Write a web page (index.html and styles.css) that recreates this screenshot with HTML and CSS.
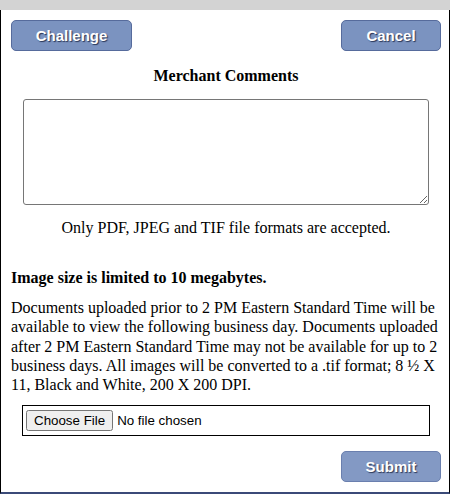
FILE: index.html
```html
<!DOCTYPE html>
<html lang="en">
  <head>
    <meta charset="UTF-8" />
    <meta name="viewport" content="width=device-width, initial-scale=1.0" />
    <title>Challenge Dispute</title>
    <link rel="stylesheet" href="styles.css">
  </head>
  <body>
    <div class="top-bar"></div>
    <div class="panel">
      <div class="actions">
        <button type="button" class="btn btn-wide">Challenge</button>
        <button type="button" class="btn">Cancel</button>
      </div>
      <h3 class="title">Merchant Comments</h3>
      <div class="comments">
        <textarea rows="6"></textarea>
      </div>
      <p class="formats">Only PDF, JPEG and TIF file formats are accepted.</p>
      <p class="limit">Image size is limited to 10 megabytes.</p>
      <p class="notice">
        Documents uploaded prior to 2 PM Eastern Standard Time will be
        available to view the following business day. Documents uploaded
        after 2 PM Eastern Standard Time may not be available for up to 2
        business days. All images will be converted to a .tif format; 8 &frac12; X
        11, Black and White, 200 X 200 DPI.
      </p>
      <div class="upload">
        <input type="file" />
      </div>
      <div class="submit-row">
        <button type="button" class="btn btn-soft">Submit</button>
      </div>
    </div>
  </body>
</html>
```

FILE: styles.css
```css
body {
  margin: 0;
  font-family: "Liberation Serif", "Times New Roman", serif;
  font-size: 16px;
  color: #000;
  background: #fff;
}

.top-bar {
  height: 10px;
  width: 450px;
  background-color: #d3d3d3;
}

.panel {
  width: 450px;
  height: 484px;
  box-sizing: border-box;
  border-left: 1px solid #000;
  border-right: 1px solid #000;
  border-bottom: 2px solid #3b4a78;
  padding: 10px 8px 0 10px;
}

.actions {
  display: flex;
  justify-content: space-between;
}

.btn {
  width: 100px;
  height: 31px;
  background-color: #7b93c0;
  border: 1px solid #566b9c;
  border-radius: 5px;
  color: #fff;
  font-family: "Liberation Sans", Arial, sans-serif;
  font-size: 15px;
  font-weight: bold;
  text-shadow: 1px 1px 1px rgba(20, 30, 60, 0.8);
  cursor: pointer;
  padding: 0;
}

.btn-wide {
  width: 121px;
}

.btn-soft {
  background-color: #8399c4;
  border-color: #6a7fae;
}

.title {
  text-align: center;
  font-size: 16px;
  font-weight: bold;
  margin: 16px 0 14px;
}

.comments {
  padding: 0 12px 0 12px;
}

.comments textarea {
  display: block;
  width: 100%;
  height: 106px;
  box-sizing: border-box;
  border: 1px solid #767676;
  border-radius: 3px;
  resize: vertical;
}

.formats {
  text-align: center;
  margin: 14px 0 0;
}

.limit {
  font-weight: bold;
  margin: 32px 0 0;
}

.notice {
  margin: 11px 0 0;
  line-height: 19.3px;
}

.upload {
  margin: 11px 11px 0 11px;
  border: 1px solid #000;
  padding: 4px 3px;
  font-family: "Liberation Sans", Arial, sans-serif;
  font-size: 14px;
}

.submit-row {
  display: flex;
  justify-content: flex-end;
  margin-top: 15px;
}
```
